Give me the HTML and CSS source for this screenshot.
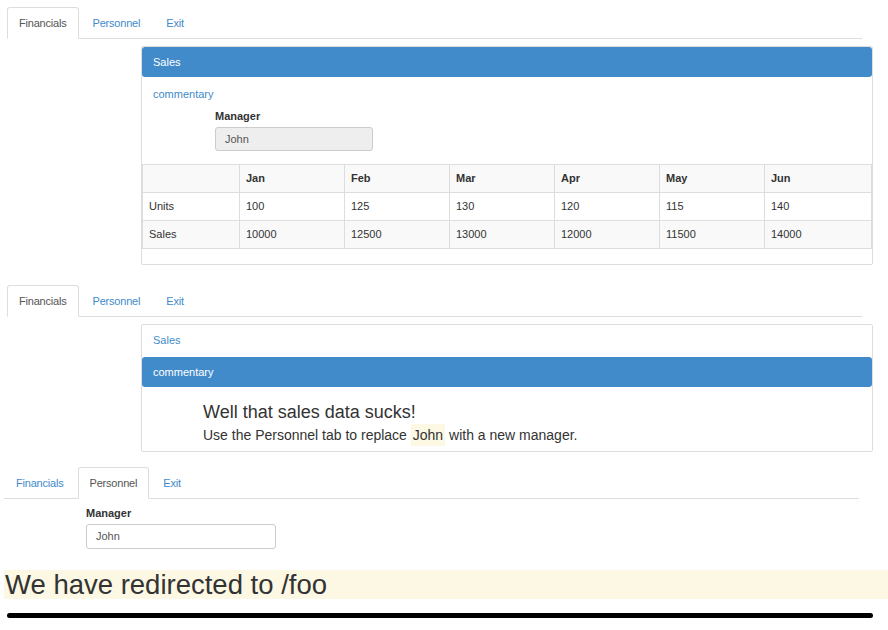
FILE: index.html
```html
<!DOCTYPE html>
<html>
<head>
<meta charset="utf-8">
<link rel="stylesheet" href="styles.css">
</head>
<body>
<div class="sec sec1">
  <ul class="tabs">
    <li class="active"><a>Financials</a></li>
    <li><a>Personnel</a></li>
    <li><a>Exit</a></li>
  </ul>
  <div class="panel">
    <ul class="pills">
      <li class="active"><a>Sales</a></li>
      <li><a>commentary</a></li>
    </ul>
    <div class="group group-panel">
      <label>Manager</label>
      <div class="input disabled">John</div>
    </div>
    <table class="grid">
      <colgroup>
        <col class="c0"><col class="c1"><col class="c1"><col class="c1"><col class="c1"><col class="c1"><col>
      </colgroup>
      <tr class="striped head"><td></td><td>Jan</td><td>Feb</td><td>Mar</td><td>Apr</td><td>May</td><td>Jun</td></tr>
      <tr><td>Units</td><td>100</td><td>125</td><td>130</td><td>120</td><td>115</td><td>140</td></tr>
      <tr class="striped"><td>Sales</td><td>10000</td><td>12500</td><td>13000</td><td>12000</td><td>11500</td><td>14000</td></tr>
    </table>
  </div>
</div>

<div class="sec sec2">
  <ul class="tabs">
    <li class="active"><a>Financials</a></li>
    <li><a>Personnel</a></li>
    <li><a>Exit</a></li>
  </ul>
  <div class="panel">
    <ul class="pills">
      <li><a>Sales</a></li>
      <li class="active"><a>commentary</a></li>
    </ul>
    <div class="comment">
      <h4>Well that sales data sucks!</h4>
      <p>Use the Personnel tab to replace <mark>John</mark> with a new manager.</p>
    </div>
  </div>
</div>

<div class="sec sec3">
  <ul class="tabs">
    <li><a>Financials</a></li>
    <li class="active"><a>Personnel</a></li>
    <li><a>Exit</a></li>
  </ul>
  <div class="group group-personnel">
    <label>Manager</label>
    <div class="input">John</div>
  </div>
  <div class="redirect">We have redirected to /foo</div>
  <div class="rule"></div>
</div>
</body>
</html>
```

FILE: styles.css
```css
* { box-sizing: border-box; }
html, body { margin: 0; padding: 0; background: #fff; }
body {
  font-family: "Liberation Sans", Arial, sans-serif;
  font-size: 11px;
  line-height: 16px;
  color: #333;
}
.sec1 { padding: 7px 0 0 7px; }
.sec2 { padding: 20px 0 0 7px; }
.sec3 { padding: 15px 0 0 4px; }

.tabs {
  list-style: none;
  margin: 0;
  padding: 0;
  width: 855px;
  display: flex;
  border-bottom: 1px solid #ddd;
}
.tabs li { margin-bottom: -1px; }
.tabs a {
  display: block;
  padding: 7px 11px;
  line-height: 16px;
  margin-right: 2px;
  border: 1px solid transparent;
  border-radius: 3px 3px 0 0;
  color: #428bca;
  letter-spacing: -0.2px;
}
.tabs li.active a {
  color: #555;
  background: #fff;
  border-color: #ddd;
  border-bottom-color: transparent;
}

.panel {
  margin: 7px 0 0 134px;
  width: 732px;
  border: 1px solid #ddd;
  border-radius: 2px;
  background: #fff;
}
.pills { list-style: none; margin: 0; padding: 0; }
.pills li + li { margin-top: 2px; }
.pills a {
  display: block;
  padding: 7px 11px;
  line-height: 16px;
  border-radius: 3px;
  color: #428bca;
}
.pills li.active a { background: #428bca; color: #fff; }

.group label {
  display: block;
  font-weight: bold;
  line-height: 16px;
  color: #333;
}
.input {
  border: 1px solid #ccc;
  border-radius: 3px;
  padding: 0 9px;
  color: #555;
  background: #fff;
}
.group-panel { margin-left: 73px; }
.group-panel label { margin: -1px 0 3px 0; }
.group-panel .input { width: 158px; height: 24px; line-height: 22px; }
.input.disabled { background: #eee; }

.grid {
  width: 100%;
  table-layout: fixed;
  border-collapse: collapse;
  margin: 13px 0 15px 0;
}
.grid col.c0 { width: 97px; }
.grid col.c1 { width: 105px; }
.grid td {
  border: 1px solid #ddd;
  padding: 5px 6px 6px 6px;
  line-height: 16px;
  white-space: nowrap;
}
.grid tr.striped td { background: #f9f9f9; }
.grid tr.head td { font-weight: bold; }

.comment { margin: 15px 0 0 61px; padding-bottom: 7px; }
.comment h4 {
  margin: 0 0 4px 0;
  font-size: 18px;
  font-weight: normal;
  line-height: 20px;
  color: #333;
}
.comment p {
  margin: 0;
  font-size: 14px;
  line-height: 18px;
  color: #333;
}
.comment mark {
  background: #fcf8e3;
  color: #333;
  padding: 3px 2px;
}

.group-personnel { margin: 6px 0 0 82px; }
.group-personnel label { margin-bottom: 3px; }
.group-personnel .input { width: 190px; height: 25px; line-height: 23px; }

.redirect {
  margin-top: 21px;
  background: #fcf8e3;
  font-size: 27.5px;
  line-height: 29px;
  padding-left: 1px;
  color: #333;
}
.rule {
  margin: 14px 0 0 3px;
  width: 866px;
  height: 5px;
  background: #000;
  border-radius: 3px;
}
```
